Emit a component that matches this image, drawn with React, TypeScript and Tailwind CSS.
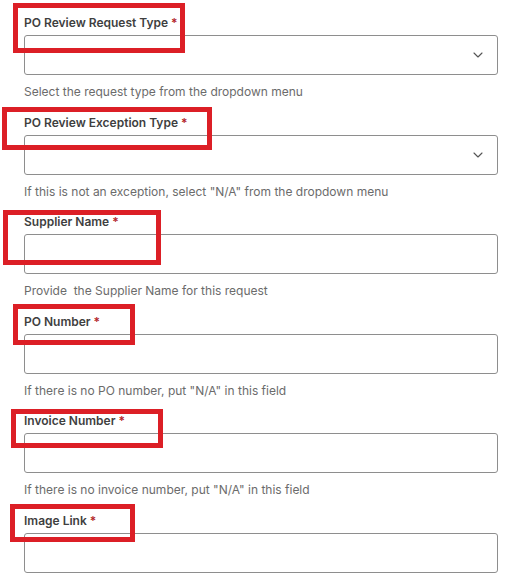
import React from 'react';

interface FieldProps {
  label: string;
  help?: string;
  select?: boolean;
}

const fields: FieldProps[] = [
  { label: 'PO Review Request Type', help: 'Select the request type from the dropdown menu', select: true },
  { label: 'PO Review Exception Type', help: 'If this is not an exception, select "N/A" from the dropdown menu', select: true },
  { label: 'Supplier Name', help: 'Provide\u00a0 the Supplier Name for this request' },
  { label: 'PO Number', help: 'If there is no PO number, put "N/A" in this field' },
  { label: 'Invoice Number', help: 'If there is no invoice number, put "N/A" in this field' },
  { label: 'Image Link' },
];

// red annotation boxes drawn over the labels
const marks = [
  'left-[13px] top-[3px] w-[172px] h-[50px]',
  'left-[2px] top-[107px] w-[210px] h-[43px]',
  'left-[3px] top-[210px] w-[158px] h-[55px]',
  'left-[13px] top-[304px] w-[122px] h-[41px]',
  'left-[11px] top-[409px] w-[152px] h-[39px]',
  'left-[10px] top-[504px] w-[125px] h-[38px]',
];

const Field: React.FC<FieldProps> = ({ label, help, select }) => (
  <div className="mb-[14.5px]">
    <label className="block h-4 text-xs leading-4 font-semibold text-[#3f3f3f]">
      {label}
      <span className="ml-[3px] text-[#b3262b]">*</span>
    </label>
    <div className="mt-1 h-10 rounded-[3px] border border-[#8e8e8e] bg-white flex items-center justify-end pr-[14px]">
      {select && (
        <svg width="10" height="6" viewBox="0 0 10 6" fill="none">
          <path d="M1 1l4 4 4-4" stroke="#555" strokeWidth="1.1" strokeLinecap="round" strokeLinejoin="round" />
        </svg>
      )}
    </div>
    {help && <p className="mt-[9px] h-4 text-xs leading-4 text-[#6b6b6b]">{help}</p>}
  </div>
);

export default function App() {
  return (
    <div
      className="relative w-[511px] h-[575px] overflow-hidden bg-white pl-6 pr-[13px] pt-[15px]"
      style={{ fontFamily: 'Inter, "Noto Sans", "Liberation Sans", sans-serif' }}
    >
      {fields.map((f) => (
        <Field key={f.label} {...f} />
      ))}

      {marks.map((m) => (
        <div key={m} className={`absolute border-[5px] border-[#dc1f26] pointer-events-none ${m}`} />
      ))}
    </div>
  );
}
